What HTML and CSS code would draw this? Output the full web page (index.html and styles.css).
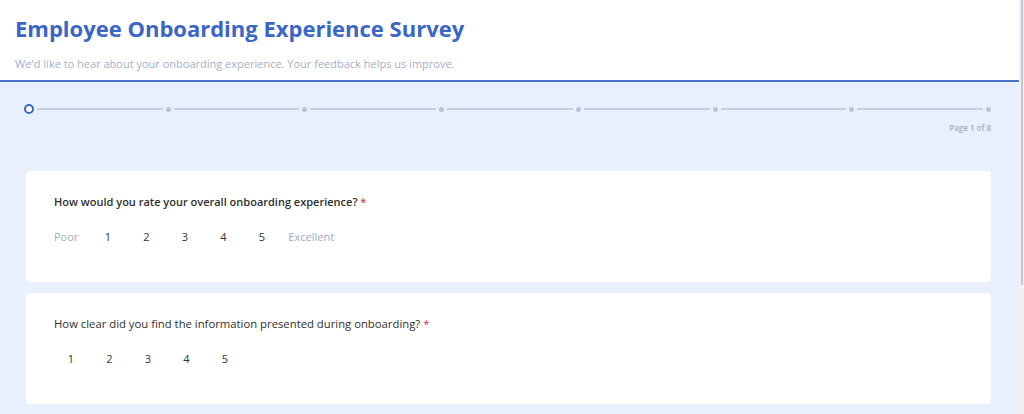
FILE: index.html
```html
<!DOCTYPE html>
<html lang="en">
<head>
    <meta charset="UTF-8">
    <meta name="viewport" content="width=device-width, initial-scale=1.0">
    <title>Employee Onboarding Experience Survey</title>
    <link rel="stylesheet" href="styles.css">
</head>
<body>
    <div class="page">
        <div class="main">
            <header class="survey-header">
                <h1>Employee Onboarding Experience Survey</h1>
                <p class="subtitle">We'd like to hear about your onboarding experience. Your feedback helps us improve.</p>
            </header>

            <div class="content">
                <div class="progress">
                    <div class="steps">
                        <span class="step current"></span>
                        <span class="line"></span>
                        <span class="step"></span>
                        <span class="line"></span>
                        <span class="step"></span>
                        <span class="line"></span>
                        <span class="step"></span>
                        <span class="line"></span>
                        <span class="step"></span>
                        <span class="line"></span>
                        <span class="step"></span>
                        <span class="line"></span>
                        <span class="step"></span>
                        <span class="line"></span>
                        <span class="step"></span>
                    </div>
                    <div class="page-count">Page 1 of 8</div>
                </div>

                <div class="question-card">
                    <div class="question strong">How would you rate your overall onboarding experience? <span class="required">*</span></div>
                    <div class="rating">
                        <span class="rating-label">Poor</span>
                        <span class="rating-option">1</span>
                        <span class="rating-option">2</span>
                        <span class="rating-option">3</span>
                        <span class="rating-option">4</span>
                        <span class="rating-option">5</span>
                        <span class="rating-label">Excellent</span>
                    </div>
                </div>

                <div class="question-card">
                    <div class="question">How clear did you find the information presented during onboarding? <span class="required">*</span></div>
                    <div class="rating">
                        <span class="rating-option">1</span>
                        <span class="rating-option">2</span>
                        <span class="rating-option">3</span>
                        <span class="rating-option">4</span>
                        <span class="rating-option">5</span>
                    </div>
                </div>
            </div>
        </div>
        <div class="scrollbar"><div class="thumb"></div></div>
    </div>
</body>
</html>
```

FILE: styles.css
```css
html, body {
    margin: 0;
    height: 100%;
    overflow: hidden;
}

body {
    font-family: "Open Sans", "Noto Sans", sans-serif;
    background-color: #e8f0fd;
    color: #2b2b2b;
}

.page {
    display: flex;
    height: 100%;
}

.main {
    flex: 1;
    min-width: 0;
}

/* header */
.survey-header {
    background-color: #fff;
    height: 82px;
    box-sizing: border-box;
    padding: 13px 15px 0 15px;
    border-bottom: 2px solid #4a72c9;
}

.survey-header h1 {
    margin: 0;
    font-size: 22px;
    line-height: 30px;
    font-weight: 700;
    color: #3a66c6;
}

.subtitle {
    margin: 13px 0 0 0;
    font-size: 11px;
    line-height: 16px;
    color: #a3b0c9;
}

.content {
    padding: 0 28px 0 26px;
}

/* progress */
.progress {
    padding: 22px 0 0 0;
    margin-left: -2px;
}

.steps {
    display: flex;
    align-items: center;
    gap: 3px;
    height: 10px;
}

.step {
    width: 5px;
    height: 5px;
    border-radius: 50%;
    background-color: #b9c4da;
    flex: none;
}

.step.current {
    width: 10px;
    height: 10px;
    box-sizing: border-box;
    border: 2.5px solid #3a66c6;
    background-color: #fff;
}

.line {
    flex: 1;
    height: 2px;
    background-color: #c6d0e3;
}

.page-count {
    margin-top: 8px;
    text-align: right;
    font-size: 8px;
    line-height: 11px;
    font-weight: 600;
    color: #a2aec6;
}

/* questions */
.question-card {
    background-color: #fff;
    border-radius: 4px;
    padding: 23px 28px 37px 28px;
    margin-top: 38px;
}

.question-card + .question-card {
    margin-top: 11px;
}

.question {
    font-size: 11.3px;
    line-height: 16px;
    color: #2f2f2f;
}

.question.strong {
    font-size: 11px;
    font-weight: 600;
}

.required {
    color: #d93a3c;
}

.rating {
    display: flex;
    align-items: center;
    gap: 4.5px;
    margin-top: 19px;
    font-size: 11px;
    line-height: 16px;
}

.rating-label {
    color: #a0abc6;
}

.rating-label:first-child {
    margin-right: 8px;
}

.rating-label:last-child {
    margin-left: 5px;
}

.rating-option {
    width: 34px;
    text-align: center;
    color: #333;
}

/* scrollbar strip on the right */
.scrollbar {
    width: 5px;
    background-color: #f1f1f3;
    flex: none;
}

.thumb {
    margin-left: 2px;
    width: 2px;
    height: 285px;
    background-color: #c5c5cb;
}
```
